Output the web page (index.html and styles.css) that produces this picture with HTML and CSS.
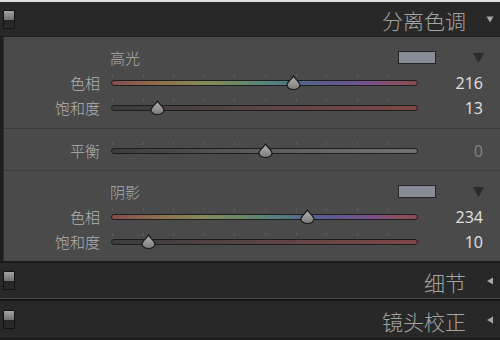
FILE: index.html
```html
<!DOCTYPE html>
<html lang="zh">
<head>
<meta charset="utf-8">
<link rel="stylesheet" href="styles.css">
</head>
<body>
<div class="topline"></div>
<div class="header">
  <span class="toggle"></span>
  <span class="title">分离色调</span>
  <svg class="caret" width="8" height="8" viewBox="0 0 8 8"><path d="M0.5 1.5 H7.5 L4 7.5 Z" fill="#a8a8a8"/></svg>
</div>
<div class="panel">
  <div class="section">
    <div class="group-head">
      <span class="group-label">高光</span>
      <span class="swatch"></span>
      <svg class="drop" width="11" height="10" viewBox="0 0 11 10"><path d="M0 0 H11 L5.5 10 Z" fill="#2b2b2b"/></svg>
    </div>
    <div class="row">
      <span class="label">色相</span>
      <div class="track hue"><span class="thumb" style="left:59.6%"><svg width="15" height="15" viewBox="0 0 15 15"><use href="#tp"/></svg></span></div>
      <span class="value">216</span>
    </div>
    <div class="row">
      <span class="label">饱和度</span>
      <div class="track sat"><span class="thumb" style="left:15%"><svg width="15" height="15" viewBox="0 0 15 15"><use href="#tp"/></svg></span></div>
      <span class="value">13</span>
    </div>
  </div>
  <div class="divider"></div>
  <div class="section single">
    <div class="row">
      <span class="label">平衡</span>
      <div class="track bal"><span class="thumb" style="left:50.2%"><svg width="15" height="15" viewBox="0 0 15 15"><use href="#tp"/></svg></span></div>
      <span class="value dim">0</span>
    </div>
  </div>
  <div class="divider"></div>
  <div class="section last">
    <div class="group-head">
      <span class="group-label">阴影</span>
      <span class="swatch"></span>
      <svg class="drop" width="11" height="10" viewBox="0 0 11 10"><path d="M0 0 H11 L5.5 10 Z" fill="#2b2b2b"/></svg>
    </div>
    <div class="row">
      <span class="label">色相</span>
      <div class="track hue"><span class="thumb" style="left:64.2%"><svg width="15" height="15" viewBox="0 0 15 15"><use href="#tp"/></svg></span></div>
      <span class="value">234</span>
    </div>
    <div class="row">
      <span class="label">饱和度</span>
      <div class="track sat"><span class="thumb" style="left:12%"><svg width="15" height="15" viewBox="0 0 15 15"><use href="#tp"/></svg></span></div>
      <span class="value">10</span>
    </div>
  </div>
</div>
<div class="gap"></div>
<div class="header h2">
  <span class="toggle"></span>
  <span class="title">细节</span>
  <svg class="caret" width="8" height="8" viewBox="0 0 8 8"><path d="M7 0.5 V7.5 L1 4 Z" fill="#a8a8a8"/></svg>
</div>
<div class="sep"></div>
<div class="header h3">
  <span class="toggle"></span>
  <span class="title">镜头校正</span>
  <svg class="caret" width="8" height="8" viewBox="0 0 8 8"><path d="M7 0.5 V7.5 L1 4 Z" fill="#a8a8a8"/></svg>
</div>
<svg width="0" height="0" class="defs">
  <defs>
    <linearGradient id="tg" x1="0" y1="0" x2="0" y2="1">
      <stop offset="0" stop-color="#b4b4b4"/>
      <stop offset="1" stop-color="#7a7a7a"/>
    </linearGradient>
    <g id="tp"><path d="M7.5 1 C9 4 14 7 14 10 A6.5 4.5 0 0 1 1 10 C1 7 6 4 7.5 1 Z" fill="url(#tg)" stroke="#1a1a1a" stroke-width="1.2"/></g>
  </defs>
</svg>
</body>
</html>
```

FILE: styles.css
```css
html, body {
  margin: 0;
  padding: 0;
}
body {
  width: 500px;
  height: 340px;
  overflow: hidden;
  background: #1e1e1e;
  font-family: "Noto Sans CJK SC", "Noto Sans", sans-serif;
}
.defs {
  position: absolute;
}
.topline {
  height: 2px;
  background: #dedede;
}
.header {
  height: 34px;
  display: flex;
  align-items: center;
  background: #282828;
  padding: 0 6px 0 3px;
}
.header.h2 {
  height: 35px;
}
.header.h3 {
  height: 37px;
  border-bottom: 1px solid #161616;
}
.toggle {
  width: 10px;
  height: 17px;
  border: 1px solid #121212;
  border-radius: 1px;
  background: linear-gradient(to bottom, #a4a4a4 0, #6e6e6e 9px, #262626 9px, #2a2a2a 100%);
}
.title {
  margin-left: auto;
  margin-right: 20px;
  padding-top: 3px;
  font-size: 21px;
  font-weight: 300;
  line-height: 1;
  color: #a4a4a4;
}
.caret {
  display: block;
}
.panel {
  margin-left: 3px;
  height: 224px;
  border-top: 1px solid #1c1c1c;
  border-left: 1px solid #2e2e2e;
  background: #4a4a4a;
  display: flex;
  flex-direction: column;
}
.section {
  padding: 8px 0 8px 0;
}
.section.single {
  padding: 9px 0 7px 0;
}
.section.last {
  padding: 8px 0 7px 0;
}
.divider {
  height: 1px;
  background: #3b3b3b;
}
.group-head {
  height: 25px;
  display: flex;
  align-items: center;
  padding: 0 16px 0 106px;
}
.group-label {
  font-size: 15px;
  font-weight: 300;
  line-height: 1;
  color: #b0b0b0;
}
.swatch {
  margin-left: auto;
  width: 36px;
  height: 11px;
  border: 1px solid #242424;
  background: #888c97;
}
.drop {
  display: block;
  margin-left: 37px;
}
.row {
  height: 25px;
  display: grid;
  grid-template-columns: 96px 307px 1fr;
  column-gap: 11px;
  align-items: center;
}
.label {
  text-align: right;
  font-size: 15px;
  font-weight: 300;
  line-height: 1;
  color: #b2b2b2;
}
.value {
  text-align: right;
  padding-right: 17px;
  font-family: "Open Sans", "Noto Sans", sans-serif;
  font-size: 16px;
  line-height: 1;
  color: #e2e2e2;
}
.value.dim {
  color: #858585;
}
.track {
  position: relative;
  height: 4px;
  border: 1px solid #1e1e1e;
  border-radius: 3px;
  box-sizing: content-box;
}
.track::before {
  content: "";
  position: absolute;
  left: 0;
  right: 0;
  top: -7px;
  height: 3px;
  background: repeating-linear-gradient(to right, #5c5c5c 0, #5c5c5c 1px, transparent 1px, transparent 30.6px);
}
.track.hue {
  background: linear-gradient(to right, #874c4c 0%, #8e744e 18%, #848a58 30%, #6a8866 42%, #568280 52%, #526a88 62%, #5e5890 72%, #78528a 84%, #8a5066 93%, #874c4c 100%);
}
.track.sat {
  background: linear-gradient(to right, #3c3c3c 0%, #584444 45%, #804646 100%);
}
.track.bal {
  background: linear-gradient(to right, #3c3c3c 0%, #5c5c5c 50%, #727272 100%);
}
.thumb {
  position: absolute;
  top: -6px;
  width: 15px;
  height: 15px;
  margin-left: -7.5px;
}
.thumb svg {
  display: block;
}
.gap {
  height: 2px;
  background: #1b1b1b;
}
.sep {
  height: 1px;
  background: #4a4a4a;
  border-bottom: 2px solid #141414;
}
```
